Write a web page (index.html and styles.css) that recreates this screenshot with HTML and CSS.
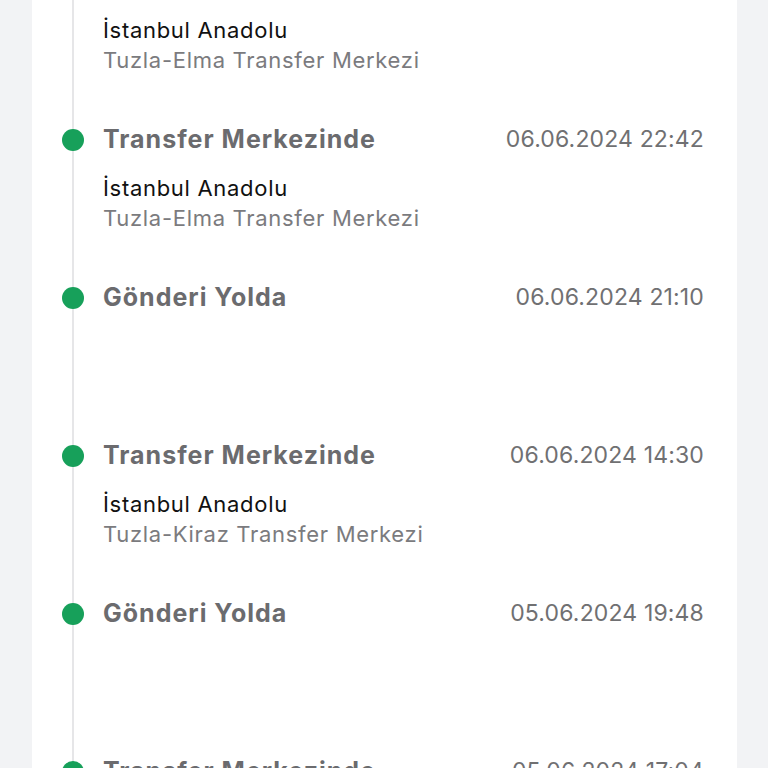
FILE: index.html
```html
<!DOCTYPE html>
<html lang="tr">
<head>
    <meta charset="UTF-8">
    <meta name="viewport" content="width=device-width, initial-scale=1.0">
    <title>Gönderi Takip</title>
    <link rel="stylesheet" href="styles.css">
</head>
<body>
    <div class="card">
        <ul class="timeline">
            <li class="step">
                <div class="step-head">
                    <span class="step-title">Transfer Merkezinde</span>
                    <span class="step-date">07.06.2024 01:15</span>
                </div>
                <p class="step-city">İstanbul Anadolu</p>
                <p class="step-place">Tuzla-Elma Transfer Merkezi</p>
            </li>
            <li class="step">
                <div class="step-head">
                    <span class="step-title">Transfer Merkezinde</span>
                    <span class="step-date">06.06.2024 22:42</span>
                </div>
                <p class="step-city">İstanbul Anadolu</p>
                <p class="step-place">Tuzla-Elma Transfer Merkezi</p>
            </li>
            <li class="step">
                <div class="step-head">
                    <span class="step-title">Gönderi Yolda</span>
                    <span class="step-date">06.06.2024 21:10</span>
                </div>
            </li>
            <li class="step">
                <div class="step-head">
                    <span class="step-title">Transfer Merkezinde</span>
                    <span class="step-date">06.06.2024 14:30</span>
                </div>
                <p class="step-city">İstanbul Anadolu</p>
                <p class="step-place">Tuzla-Kiraz Transfer Merkezi</p>
            </li>
            <li class="step">
                <div class="step-head">
                    <span class="step-title">Gönderi Yolda</span>
                    <span class="step-date">05.06.2024 19:48</span>
                </div>
            </li>
            <li class="step">
                <div class="step-head">
                    <span class="step-title">Transfer Merkezinde</span>
                    <span class="step-date">05.06.2024 17:04</span>
                </div>
                <p class="step-city">İstanbul Anadolu</p>
                <p class="step-place">Tuzla-Kiraz Transfer Merkezi</p>
            </li>
        </ul>
    </div>
</body>
</html>
```

FILE: styles.css
```css
body {
    margin: 0;
    background-color: #f2f3f5;
    font-family: Inter, "Noto Sans", sans-serif;
    overflow: hidden;
}

.card {
    background-color: white;
    margin: 0 31px 0 32px;
    height: 768px;
    overflow: hidden;
}

.timeline {
    list-style: none;
    margin: -34px 0 0 0;
    padding: 0 33px 0 0;
}

.step {
    position: relative;
    height: 158px;
    padding-left: 71px;
    box-sizing: border-box;
}

/* vertical line */
.step::before {
    content: "";
    position: absolute;
    left: 40px;
    top: 0;
    bottom: 0;
    width: 2px;
    background-color: #e6e6e8;
}

/* green dot */
.step::after {
    content: "";
    position: absolute;
    left: 30px;
    top: 5px;
    width: 22px;
    height: 22px;
    border-radius: 50%;
    background-color: #17a05a;
}

.step-head {
    display: flex;
    justify-content: space-between;
    align-items: center;
    height: 30px;
}

.step-title {
    font-size: 25px;
    font-weight: 700;
    letter-spacing: 1px;
    color: #6b6b6e;
}

.step-date {
    font-size: 23px;
    letter-spacing: 0.15px;
    color: #707072;
}

.step-city,
.step-place {
    margin: 0;
    font-size: 22px;
    letter-spacing: 0.7px;
    line-height: 30px;
}

.step-city {
    margin-top: 19px;
    color: #111;
}

.step-place {
    color: #7b7b7e;
}
```
